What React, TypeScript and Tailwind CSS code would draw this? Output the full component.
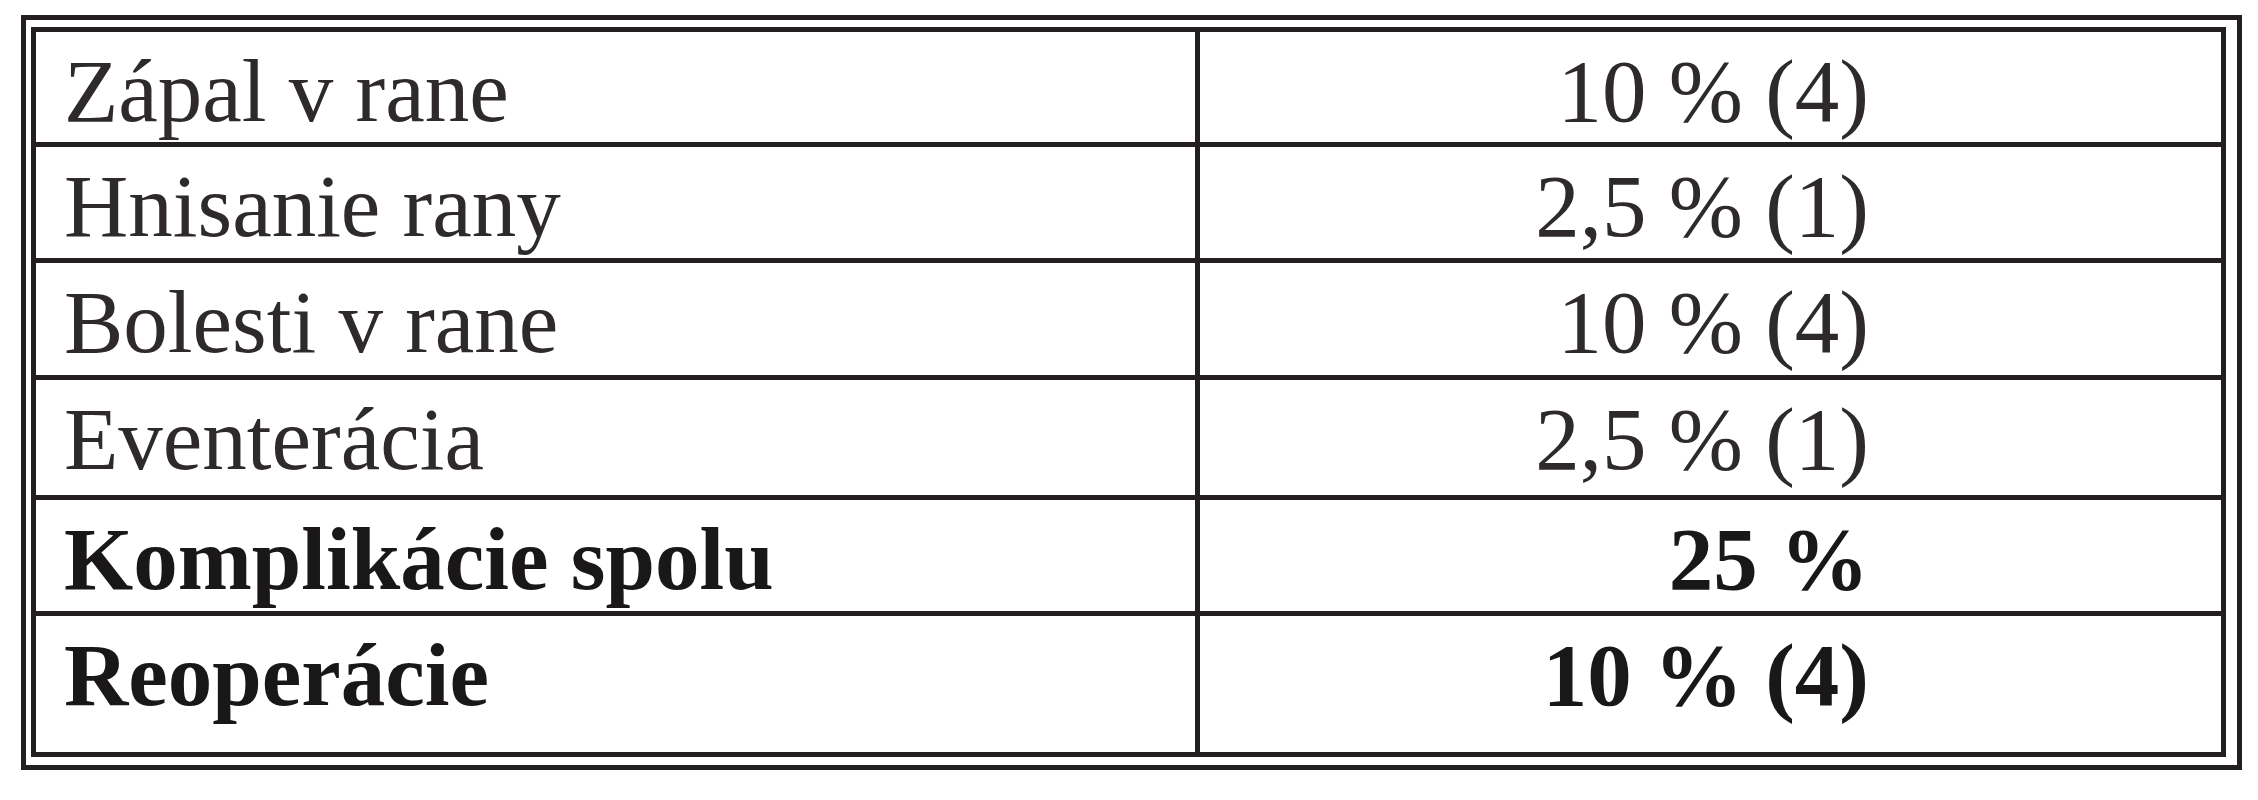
const ROWS = [
  { label: "Zápal v rane", value: "10 % (4)", bold: false, h: "h-[115px]" },
  { label: "Hnisanie rany", value: "2,5 % (1)", bold: false, h: "h-[116px]" },
  { label: "Bolesti v rane", value: "10 % (4)", bold: false, h: "h-[117px]" },
  { label: "Eventerácia", value: "2,5 % (1)", bold: false, h: "h-[120px]" },
  { label: "Komplikácie spolu", value: "25 %", bold: true, h: "h-[116px]" },
  { label: "Reoperácie", value: "10 % (4)", bold: true, h: "h-[136px]" },
];

export default function App() {
  return (
    <div className="min-h-[800px] w-[2258px] bg-white pt-[15px] pl-[21px] font-['Liberation_Serif','Times_New_Roman',serif] text-[#231f20]">
      <div className="w-[2221px] border-[5px] border-[#231f20] pt-[7px] pl-[5px] pr-[11px] pb-[8px]">
        <div className="border-[5px] border-[#231f20]">
          {ROWS.map((r, i) => (
            <div
              key={r.label}
              className={`grid grid-cols-[1164px_1fr] ${r.h} ${
                i < ROWS.length - 1 ? "border-b-[5px] border-[#231f20]" : ""
              }`}
            >
              <div
                className={`border-r-[5px] border-[#231f20] pl-[28px] pt-[15px] text-[89px] leading-none ${
                  r.bold ? "font-bold text-[#1a1718]" : "text-[#2e2a2b]"
                }`}
              >
                {r.label}
              </div>
              <div
                className={`pr-[352px] pt-[15px] text-right text-[89px] leading-none ${
                  r.bold ? "font-bold text-[#1a1718]" : "text-[#2e2a2b]"
                }`}
              >
                {r.value}
              </div>
            </div>
          ))}
        </div>
      </div>
    </div>
  );
}
